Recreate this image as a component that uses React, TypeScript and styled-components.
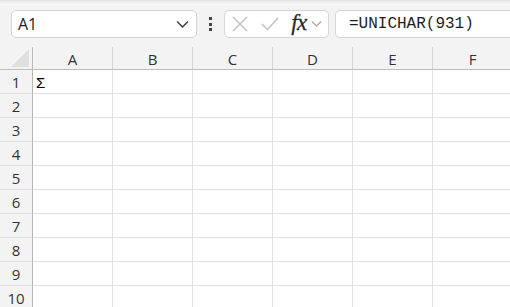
import { Fragment } from "react";
import styled, { createGlobalStyle } from "styled-components";

const GlobalStyle = createGlobalStyle`
  body {
    margin: 0;
    background: #ffffff;
    overflow: hidden;
    font-family: "Open Sans", "Noto Sans", sans-serif;
  }
`

const Page = styled.div`
  width: 510px;
  height: 307px;
  overflow: hidden;
  background: #fff;
`

const Toolbar = styled.div`
  height: 47px;
  box-sizing: border-box;
  padding: 10px 0 0 11px;
  display: flex;
  align-items: flex-start;
  background: linear-gradient(#dcdcdc 0px, #ebebeb 1px, #f3f3f3 4px, #f3f3f3);
  & > * {
    flex-shrink: 0;
  }
`

const Box = styled.div<{ $w: number }>`
  width: ${p => p.$w}px;
  height: 28px;
  box-sizing: border-box;
  background: #fff;
  border: 1px solid #d6d6d6;
  border-radius: 5px;
  display: flex;
  align-items: center;
`

const NameText = styled.span`
  flex: 1;
  padding-left: 6px;
  font-size: 16px;
  color: #222;
`

const Dots = styled.div`
  width: 27px;
  height: 28px;
  display: flex;
  flex-direction: column;
  align-items: center;
  justify-content: center;
  gap: 2.5px;
  span {
    width: 3px;
    height: 3px;
    background: #444;
  }
`

const Spacer = styled.span<{ $w: number }>`
  width: ${p => p.$w}px;
`

const IconSlot = styled.div<{ $w: number }>`
  width: ${p => p.$w}px;
  height: 100%;
  display: flex;
  align-items: center;
  justify-content: center;
`

const Fx = styled.span`
  font-family: "Liberation Serif", "DejaVu Serif", serif;
  font-style: italic;
  font-size: 23px;
  color: #2a2a2a;
  letter-spacing: -0.5px;
  line-height: 1;
  -webkit-text-stroke: 0.3px #2a2a2a;
  margin: -3px 4px 0 0;
`

const FormulaText = styled.span`
  padding-left: 13px;
  font-family: "Liberation Mono", monospace;
  font-size: 16px;
  color: #1e1e1e;
  white-space: nowrap;
`

const Grid = styled.div`
  display: grid;
  grid-template-columns: 33px repeat(6, 80px);
  grid-auto-rows: 24px;
  grid-template-rows: 23px;
`

const Corner = styled.div`
  background: #f3f3f3;
  border-right: 1px solid #bdbdbd;
  border-bottom: 1px solid #bdbdbd;
  box-sizing: border-box;
  position: relative;
  &::after {
    content: "";
    position: absolute;
    right: 3px;
    bottom: 2px;
    width: 0;
    height: 0;
    border-left: 18px solid transparent;
    border-bottom: 18px solid #dfdfdf;
  }
`

const ColHead = styled.div`
  background: #f3f3f3;
  border-right: 1px solid #d4d4d4;
  border-bottom: 1px solid #bdbdbd;
  box-sizing: border-box;
  display: flex;
  align-items: center;
  justify-content: center;
  font-size: 15px;
  color: #333;
  padding-top: 1px;
`

const RowHead = styled.div`
  background: #f3f3f3;
  border-right: 1px solid #b5b5b5;
  border-bottom: 1px solid #dadada;
  box-sizing: border-box;
  display: flex;
  align-items: center;
  justify-content: center;
  font-size: 15px;
  color: #333;
  padding-top: 1px;
`

const Cell = styled.div`
  border-right: 1px solid #e1e1e1;
  border-bottom: 1px solid #e1e1e1;
  box-sizing: border-box;
  display: flex;
  align-items: center;
  padding: 1px 0 0 3px;
  font-family: "Liberation Sans", Arial, sans-serif;
  font-size: 15px;
  color: #000;
`

const cols = ["A", "B", "C", "D", "E", "F"]
const rows = [1, 2, 3, 4, 5, 6, 7, 8, 9, 10]

function Chevron({ color, size }: { color: string; size: number }) {
  return (
    <svg width={size} height={size / 2 + 2} viewBox="0 0 12 7">
      <path d="M1 1 L6 6 L11 1" fill="none" stroke={color} strokeWidth="1.3" />
    </svg>
  )
}

export default function App() {
  return (
    <Page>
      <GlobalStyle />
      <Toolbar>
        <Box $w={186}>
          <NameText>A1</NameText>
          <IconSlot $w={28}>
            <Chevron color="#3a3a3a" size={13} />
          </IconSlot>
        </Box>
        <Dots>
          <span />
          <span />
          <span />
        </Dots>
        <Box $w={105}>
          <IconSlot $w={30}>
            <svg width="16" height="16" viewBox="0 0 16 16">
              <path d="M1 1 L15 15 M15 1 L1 15" stroke="#bcbcbc" strokeWidth="1.3" />
            </svg>
          </IconSlot>
          <IconSlot $w={30}>
            <svg width="18" height="14" viewBox="0 0 18 14">
              <path d="M1 7 L6.5 12.5 L17 1" fill="none" stroke="#bcbcbc" strokeWidth="1.3" />
            </svg>
          </IconSlot>
          <IconSlot $w={43}>
            <Fx>fx</Fx>
            <Chevron color="#a8a8a8" size={11} />
          </IconSlot>
        </Box>
        <Spacer $w={6} />
        <Box $w={200}>
          <FormulaText>=UNICHAR(931)</FormulaText>
        </Box>
      </Toolbar>
      <Grid>
        <Corner />
        {cols.map(c => (
          <ColHead key={c}>{c}</ColHead>
        ))}
        {rows.map(r => (
          <Fragment key={r}>
            <RowHead>{r}</RowHead>
            {cols.map(c => (
              <Cell key={c + r}>{r === 1 && c === "A" ? "Σ" : ""}</Cell>
            ))}
          </Fragment>
        ))}
      </Grid>
    </Page>
  )
}
